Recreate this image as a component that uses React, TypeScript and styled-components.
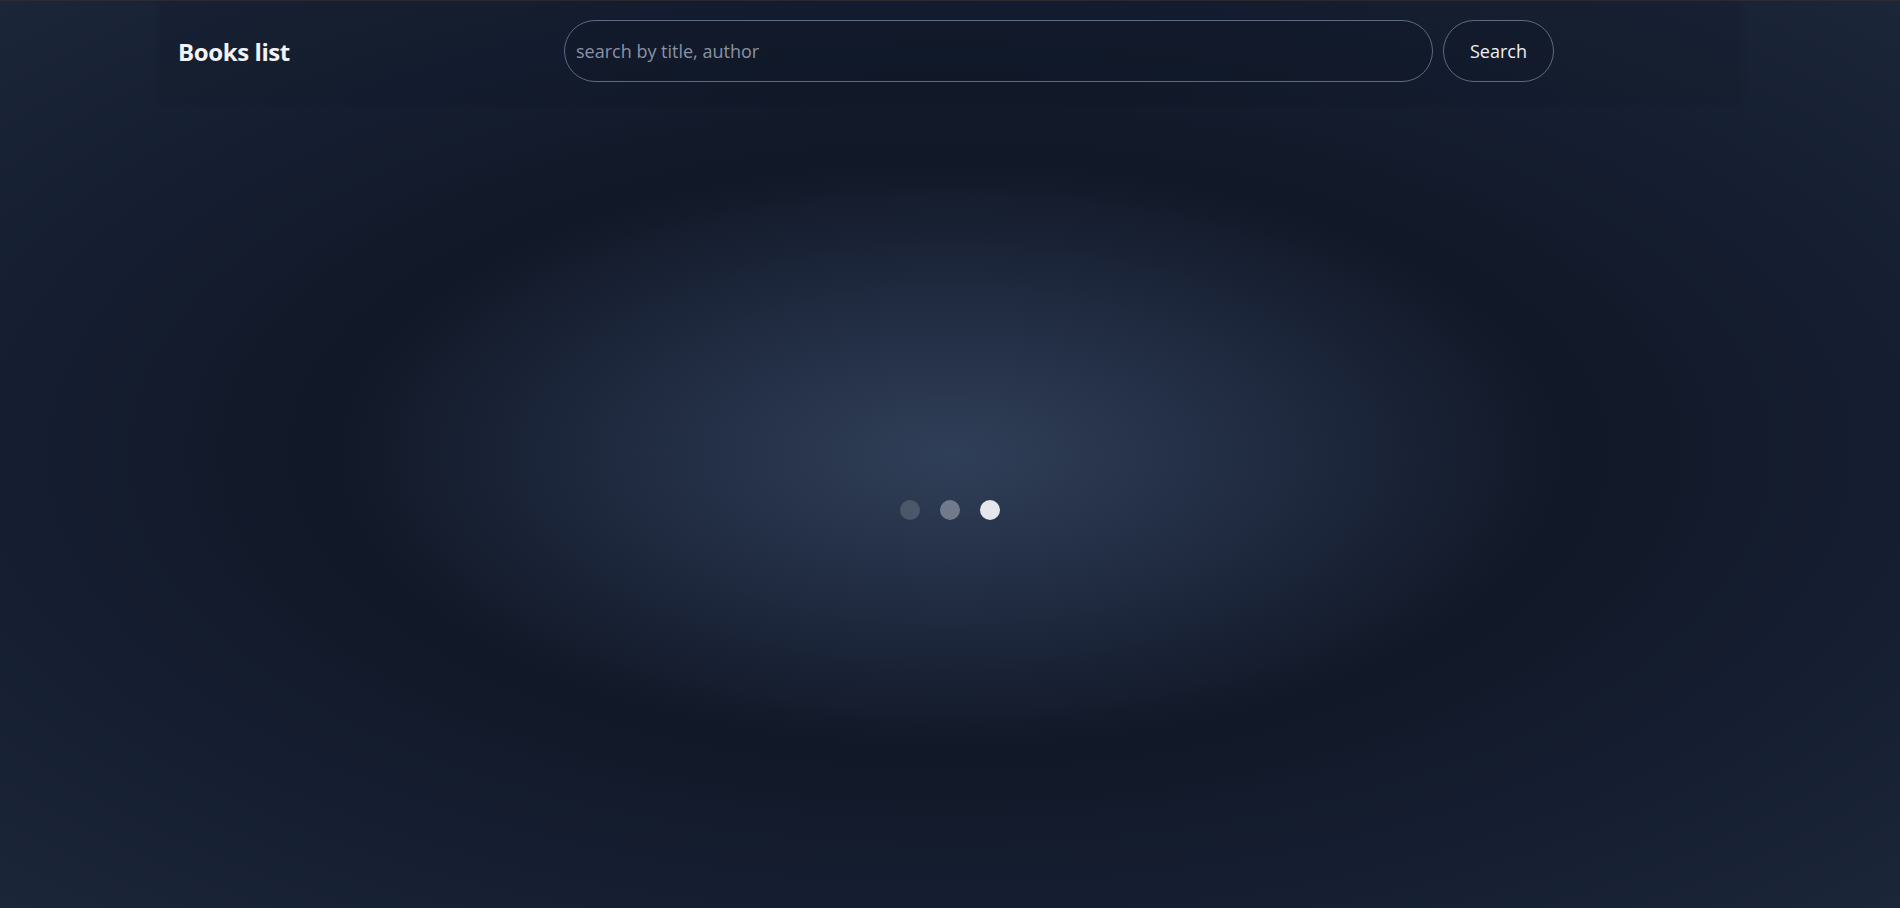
import React from "react";
import styled, { createGlobalStyle } from "styled-components";

const GlobalStyle = createGlobalStyle`
  * { box-sizing: border-box; }
  html, body { margin: 0; padding: 0; height: 100%; }
  body {
    font-family: "Open Sans", "Noto Sans", "Liberation Sans", sans-serif;
    color: #e5e7eb;
    background: #1b2539;
  }
  #root { min-height: 100vh; }
`;

const Page = styled.div`
  min-height: 100vh;
  border-top: 1px solid #2b2c2f;
  background: radial-gradient(
    ellipse at center,
    #303f58 0%,
    #202b41 24%,
    #111827 46%,
    #151e31 70%,
    #1c2639 100%
  );
  display: flex;
  flex-direction: column;
`;

const Header = styled.header`
  width: 1580px;
  max-width: 100%;
  height: 99px;
  margin: 0 auto;
  padding: 0 18px;
  display: grid;
  grid-template-columns: 386px 990px 1fr;
  align-items: center;
  background: rgba(10, 15, 28, 0.12);
  box-shadow: 0 2px 6px rgba(5, 10, 20, 0.12);
`;

const Title = styled.h1`
  margin: 0;
  padding-top: 2px;
  font-size: 24px;
  font-weight: 700;
  letter-spacing: -0.4px;
  color: #f1f3f7;
`;

const SearchForm = styled.form`
  display: flex;
  gap: 10px;
  align-items: center;
`;

const SearchInput = styled.input`
  flex: 1;
  height: 62px;
  padding: 0 11px;
  border-radius: 31px;
  border: 1px solid #5d6a84;
  background: rgba(16, 23, 40, 0.5);
  color: #e5e7eb;
  font-family: inherit;
  font-size: 18px;
  outline: none;
  &::placeholder {
    color: #8a92a4;
  }
`;

const SearchButton = styled.button`
  width: 111px;
  height: 62px;
  border-radius: 31px;
  border: 1px solid #5d6a84;
  background: rgba(16, 23, 40, 0.5);
  color: #eef0f4;
  font-family: inherit;
  font-size: 18px;
  cursor: pointer;
`;

const Main = styled.main`
  flex: 1;
  display: flex;
  align-items: center;
  justify-content: center;
  padding-top: 12px;
`;

const Loader = styled.div`
  display: flex;
  gap: 20px;
`;

const Dot = styled.span<{ $level: number }>`
  width: 20px;
  height: 20px;
  border-radius: 50%;
  background: #e5e7eb;
  opacity: ${(p) => p.$level};
`;

export default function App() {
  return (
    <>
      <GlobalStyle />
      <Page>
        <Header>
          <Title>Books list</Title>
          <SearchForm onSubmit={(e) => e.preventDefault()}>
            <SearchInput type="text" placeholder="search by title, author" />
            <SearchButton type="submit">Search</SearchButton>
          </SearchForm>
          <div />
        </Header>
        <Main>
          <Loader>
            <Dot $level={0.18} />
            <Dot $level={0.38} />
            <Dot $level={1} />
          </Loader>
        </Main>
      </Page>
    </>
  );
}
